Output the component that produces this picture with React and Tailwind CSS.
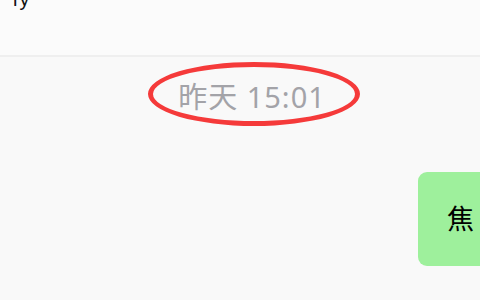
import React from "react";

export default function App() {
  return (
    <div className="w-[480px] h-[300px] overflow-hidden bg-[#f9f9f9]" style={{ fontFamily: '"Noto Sans","Noto Sans CJK SC",sans-serif' }}>
      <div className="w-[504px]">
        <div className="h-[57px] bg-[#fbfbfb] border-b-2 border-[#efefef] pl-[13px] overflow-hidden">
          <div className="-mt-[14px] text-[20px] leading-[26px] text-[#111] font-['Liberation_Sans',sans-serif] tracking-[2px]">iy</div>
        </div>
        <div className="relative flex justify-center pt-[22px]">
          <div className="text-[29px] leading-[36px] text-[#a3a3a8] tracking-[1px]">昨天 15:01</div>
          <div className="absolute left-[148px] top-[5px] w-[212px] h-[64px] rounded-[50%] border-[5px] border-[#f53a3a]"></div>
        </div>
        <div className="flex justify-end mt-[57px] pr-[0px]">
          <div className="bg-[#9ef09c] rounded-[9px] pl-[29px] pr-[30px] h-[94px] flex items-center text-[27px] text-black w-[86px]">
            焦
          </div>
        </div>
      </div>
    </div>
  );
}
